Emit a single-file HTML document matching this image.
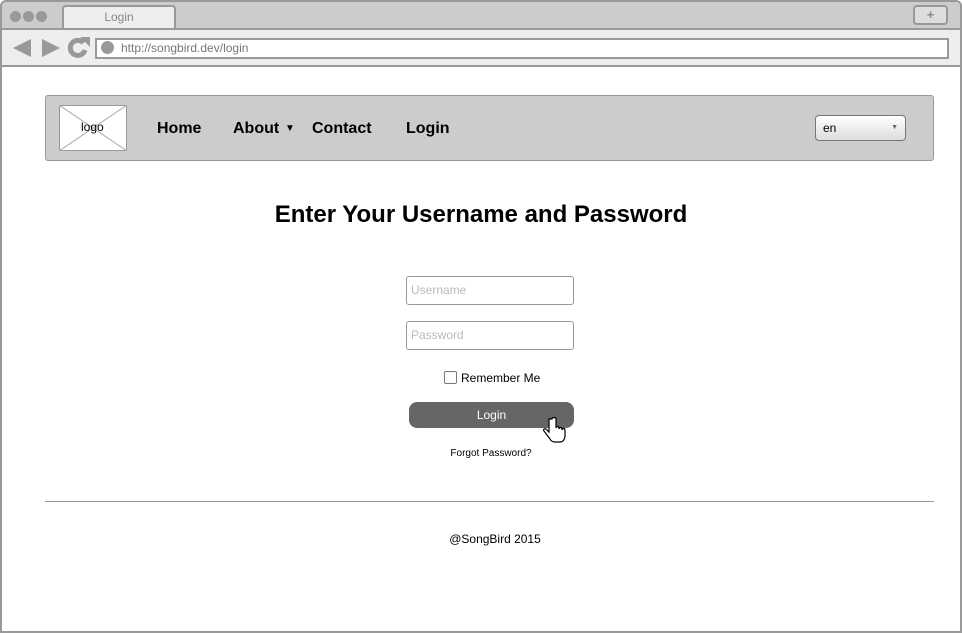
<!DOCTYPE html>
<html><head><style>
*{margin:0;padding:0;box-sizing:border-box}
body{width:962px;height:633px;background:#fff;font-family:"Liberation Sans",Arial,sans-serif;position:relative;overflow:hidden}
.a{position:absolute}
</style></head><body>
<div class="a" style="left:0;top:0;width:962px;height:633px;border:2px solid #999;border-radius:6px 6px 0 0;"></div>
<div class="a" style="left:2px;top:2px;width:958px;height:27px;background:#ccc;border-radius:4px 4px 0 0"></div>
<div class="a" style="left:10px;top:11px;width:11px;height:11px;border-radius:50%;background:#999"></div>
<div class="a" style="left:23px;top:11px;width:11px;height:11px;border-radius:50%;background:#999"></div>
<div class="a" style="left:36px;top:11px;width:11px;height:11px;border-radius:50%;background:#999"></div>
<div class="a" style="left:62px;top:5px;width:114px;height:25px;background:#eee;border:2px solid #999;border-bottom:none;border-radius:4px 4px 0 0;text-align:center;font-size:12px;color:#888;line-height:20px">Login</div>
<div class="a" style="left:913px;top:5px;width:35px;height:20px;background:#ddd;border:2px solid #999;border-radius:4px;text-align:center;font-size:13px;color:#888;line-height:15px;font-weight:bold">+</div>
<div class="a" style="left:2px;top:28px;width:958px;height:39px;background:#eee;border-top:2px solid #999;border-bottom:2px solid #999"></div>
<svg class="a" style="left:10px;top:36px" width="85" height="24"><polygon points="3,12 21,3 21,21" fill="#999"/><polygon points="32,3 50,12 32,21" fill="#999"/><path d="M73.5,7 A7.5,7.5 0 1 0 75,14" stroke="#999" stroke-width="5" fill="none"/><polygon points="70,1 80,1 80,11" fill="#999"/></svg>
<div class="a" style="left:95px;top:38px;width:854px;height:21px;background:#fff;border:2px solid #999"></div>
<div class="a" style="left:101px;top:41px;width:13px;height:13px;border-radius:50%;background:#999"></div>
<div class="a" style="left:121px;top:41px;font-size:12px;color:#777">http://songbird.dev/login</div>
<div class="a" style="left:45px;top:95px;width:889px;height:66px;background:#ccc;border:1px solid #999;border-radius:3px"></div>
<svg class="a" style="left:59px;top:105px" width="68" height="46"><rect x="0.5" y="0.5" width="67" height="45" fill="#fff" stroke="#999"/><path d="M0,0L68,46M68,0L0,46" stroke="#aaa"/></svg>
<div class="a" style="left:81px;top:120px;font-size:12px">logo</div>
<div class="a" style="left:157px;top:120px;font-size:16px;font-weight:bold">Home</div>
<div class="a" style="left:233px;top:120px;font-size:16px;font-weight:bold">About</div>
<div class="a" style="left:285px;top:123px;font-size:10px">▼</div>
<div class="a" style="left:312px;top:120px;font-size:16px;font-weight:bold">Contact</div>
<div class="a" style="left:406px;top:120px;font-size:16px;font-weight:bold">Login</div>
<div class="a" style="left:815px;top:115px;width:91px;height:26px;border:1px solid #777;border-radius:4px;background:linear-gradient(#fff,#ddd);font-size:12px;padding:5px 0 0 7px">en<span style="position:absolute;right:7px;top:8px;font-size:7px;color:#666">▼</span></div>
<div class="a" style="left:0;top:201px;width:962px;text-align:center;font-size:24px;font-weight:bold">Enter Your Username and Password</div>
<div class="a" style="left:406px;top:276px;width:168px;height:29px;border:1px solid #999;border-radius:3px;font-size:12px;color:#bbb;padding:6px 0 0 4px">Username</div>
<div class="a" style="left:406px;top:321px;width:168px;height:29px;border:1px solid #999;border-radius:3px;font-size:12px;color:#bbb;padding:6px 0 0 4px">Password</div>
<div class="a" style="left:444px;top:371px;width:13px;height:13px;border:1px solid #777;border-radius:2px"></div>
<div class="a" style="left:461px;top:371px;font-size:12px">Remember Me</div>
<div class="a" style="left:409px;top:402px;width:165px;height:26px;background:#666;border-radius:8px;color:#fff;font-size:12px;text-align:center;line-height:26px">Login</div>
<svg class="a" style="left:543px;top:416px" width="24" height="30"><path d="M6,3 v13 l-3,-3 c-2,-1 -3,1 -2,2 l6,8 c1,2 3,3 5,3 h5 c3,0 5,-3 5,-6 v-6 c0,-2 -3,-2 -3,0 v-1 c0,-2 -3,-2 -3,0 v-1 c0,-2 -3,-2 -3,0 v-9 c0,-2 -4,-2 -4,0z" fill="#fff" stroke="#000" stroke-width="1.2"/></svg>
<div class="a" style="left:0;top:448px;width:982px;text-align:center;font-size:10px">Forgot Password?</div>
<div class="a" style="left:45px;top:501px;width:889px;height:1px;background:#999"></div>
<div class="a" style="left:0;top:532px;width:990px;text-align:center;font-size:12px">@SongBird 2015</div>
</body></html>
